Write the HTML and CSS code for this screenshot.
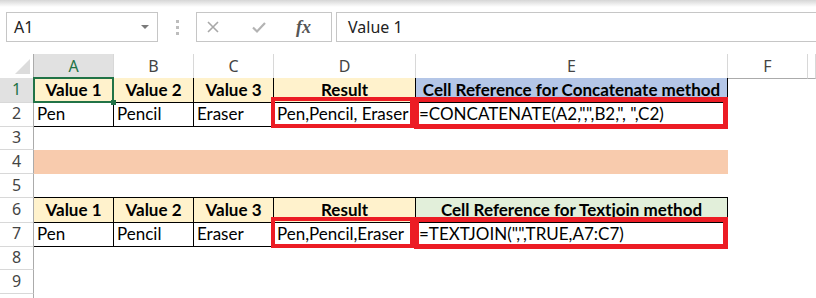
FILE: index.html
```html
<!DOCTYPE html>
<html lang="en">
<head>
  <meta charset="UTF-8" />
  <meta name="viewport" content="width=device-width, initial-scale=1" />
  <link rel="stylesheet" href="styles.css">
</head>
<body>
  <div class="toolbar">
    <div class="namebox"><span>A1</span><span class="caret"></span></div>
    <div class="grip"><i></i><i></i><i></i></div>
    <div class="fnbox">
      <svg class="ico" width="14" height="14" viewBox="0 0 14 14"><path d="M2 2 L12 12 M12 2 L2 12" stroke="#a8a8a8" stroke-width="1.6" fill="none"/></svg>
      <svg class="ico check" width="16" height="14" viewBox="0 0 16 14"><path d="M2 7.5 L6 11.5 L14 3" stroke="#b3b3b3" stroke-width="2.2" fill="none"/></svg>
      <span class="fx">fx</span>
    </div>
    <div class="formula">Value 1</div>
  </div>

  <div class="sheet">
    <div class="row head">
      <div class="corner"><svg width="34" height="24" viewBox="0 0 34 24"><polygon points="30,5 30,20 15,20" fill="#dcdcdc"/></svg></div>
      <div class="ch active">A</div>
      <div class="ch">B</div>
      <div class="ch">C</div>
      <div class="ch">D</div>
      <div class="ch">E</div>
      <div class="ch">F</div>
      <div class="ch"></div>
    </div>

    <div class="row">
      <div class="rh active">1</div>
      <div class="cell t h sel">Value 1</div>
      <div class="cell t h">Value 2</div>
      <div class="cell t h">Value 3</div>
      <div class="cell t h">Result</div>
      <div class="cell t h blue">Cell Reference for Concatenate method</div>
      <div class="cell"></div>
      <div class="cell"></div>
    </div>

    <div class="row">
      <div class="rh">2</div>
      <div class="cell t">Pen</div>
      <div class="cell t">Pencil</div>
      <div class="cell t">Eraser</div>
      <div class="cell t hl hl-d">Pen,Pencil, Eraser</div>
      <div class="cell t hl hl-e">=CONCATENATE(A2,",",B2,", ",C2)</div>
      <div class="cell"></div>
      <div class="cell"></div>
    </div>

    <div class="row">
      <div class="rh">3</div>
      <div class="cell"></div><div class="cell"></div><div class="cell"></div><div class="cell"></div><div class="cell"></div><div class="cell"></div><div class="cell"></div>
    </div>

    <div class="row">
      <div class="rh">4</div>
      <div class="cell peach"></div><div class="cell peach"></div><div class="cell peach"></div><div class="cell peach"></div><div class="cell peach"></div><div class="cell"></div><div class="cell"></div>
    </div>

    <div class="row">
      <div class="rh">5</div>
      <div class="cell edge"></div><div class="cell edge"></div><div class="cell edge"></div><div class="cell edge"></div><div class="cell edge"></div><div class="cell"></div><div class="cell"></div>
    </div>

    <div class="row">
      <div class="rh">6</div>
      <div class="cell t h">Value 1</div>
      <div class="cell t h">Value 2</div>
      <div class="cell t h">Value 3</div>
      <div class="cell t h">Result</div>
      <div class="cell t h green">Cell Reference for Textjoin method</div>
      <div class="cell"></div>
      <div class="cell"></div>
    </div>

    <div class="row">
      <div class="rh">7</div>
      <div class="cell t">Pen</div>
      <div class="cell t">Pencil</div>
      <div class="cell t">Eraser</div>
      <div class="cell t hl hl-d">Pen,Pencil,Eraser</div>
      <div class="cell t hl hl-e">=TEXTJOIN(",",TRUE,A7:C7)</div>
      <div class="cell"></div>
      <div class="cell"></div>
    </div>

    <div class="row">
      <div class="rh">8</div>
      <div class="cell"></div><div class="cell"></div><div class="cell"></div><div class="cell"></div><div class="cell"></div><div class="cell"></div><div class="cell"></div>
    </div>

    <div class="row">
      <div class="rh">9</div>
      <div class="cell"></div><div class="cell"></div><div class="cell"></div><div class="cell"></div><div class="cell"></div><div class="cell"></div><div class="cell"></div>
    </div>

    <div class="row">
      <div class="rh"></div>
      <div class="cell"></div><div class="cell"></div><div class="cell"></div><div class="cell"></div><div class="cell"></div><div class="cell"></div><div class="cell"></div>
    </div>
  </div>
</body>
</html>
```

FILE: styles.css
```css
html, body {
  margin: 0; padding: 0;
  height: 100%;
  background: #fff;
  overflow: hidden;
  font-family: Lato, "Liberation Sans", sans-serif;
}

/* formula bar */
.toolbar {
  height: 54px;
  display: flex;
  align-items: flex-start;
  padding-top: 12px;
  box-sizing: border-box;
  background: linear-gradient(#d6d6d6, #fff 7px);
}
.namebox {
  margin-left: 6px;
  width: 152px;
  height: 30px;
  border: 1px solid #c6c6c6;
  box-sizing: border-box;
  background: #fff;
  display: flex;
  align-items: center;
  justify-content: space-between;
  padding: 0 8px 0 7px;
  font: 16px "Noto Sans", sans-serif;
  color: #222;
}
.caret {
  border-left: 4px solid transparent;
  border-right: 4px solid transparent;
  border-top: 4px solid #7a7a7a;
}
.grip {
  width: 38px;
  display: flex;
  flex-direction: column;
  align-items: center;
  gap: 3px;
  padding-top: 8px;
}
.grip i {
  width: 3px;
  height: 3px;
  background: #bdbdbd;
}
.fnbox {
  width: 136px;
  height: 30px;
  border: 1px solid #c6c6c6;
  box-sizing: border-box;
  background: #fff;
  display: flex;
  align-items: center;
  padding-left: 9px;
}
.fnbox .check { margin-left: 31px; }
.fx {
  margin-left: 29px;
  font: italic bold 18px "Liberation Serif", serif;
  color: #555;
}
.formula {
  flex: 1;
  margin-left: 4px;
  height: 30px;
  border: 1px solid #c6c6c6;
  border-right: none;
  box-sizing: border-box;
  background: #fff;
  padding-left: 11px;
  font: 16px "Noto Sans", sans-serif;
  line-height: 28px;
  color: #222;
}

/* grid */
.row {
  display: grid;
  grid-template-columns: 34px 80px 80px 80px 142px 312px 80px 1fr;
  height: 24px;
}
.row > div { box-sizing: border-box; }
.corner {
  border-right: 1px solid #ababab;
  border-bottom: 1px solid #ababab;
  line-height: 0;
}
.ch {
  border-right: 1px solid #d8d8d8;
  border-bottom: 1px solid #ababab;
  text-align: center;
  font: 16px "Noto Sans", sans-serif;
  line-height: 24px;
  color: #444;
}
.rh {
  border-right: 1px solid #ababab;
  border-bottom: 1px solid #d8d8d8;
  text-align: center;
  font: 16px "Noto Sans", sans-serif;
  line-height: 23px;
  color: #444;
}
.ch.active, .rh.active {
  background: #e1e1e1;
  color: #217346;
}
.cell {
  padding: 0 3px;
  font-size: 17px;
  line-height: 24px;
  color: #000;
  white-space: nowrap;
}
.t {
  border-right: 1px solid #000;
  border-bottom: 1px solid #000;
}
.h {
  font-weight: bold;
  text-align: center;
  background: #fff2cc;
}
.h.blue { background: #b4c6e7; }
.h.green { background: #e2efda; }
.peach { background: #f8cbad; }
.edge { border-bottom: 1px solid #000; }

/* selected cell */
.sel { position: relative; }
.sel::after {
  content: "";
  position: absolute;
  left: -1px; top: -1px; right: -1px; bottom: -1px;
  border: 2px solid #217346;
}
.sel::before {
  content: "";
  position: absolute;
  right: -3px; bottom: -3px;
  width: 5px; height: 5px;
  background: #217346;
  z-index: 2;
}

/* red highlight boxes */
.hl { position: relative; }
.hl::after {
  content: "";
  position: absolute;
  z-index: 3;
}
.hl-d::after {
  left: -3px; right: 1px; top: -5px; bottom: -2px;
  border: 4px solid #ec1c24;
}
.hl-e::after {
  left: -2px; right: -1px; top: -5px; bottom: -3px;
  border: 5px solid #ec1c24;
}
```
